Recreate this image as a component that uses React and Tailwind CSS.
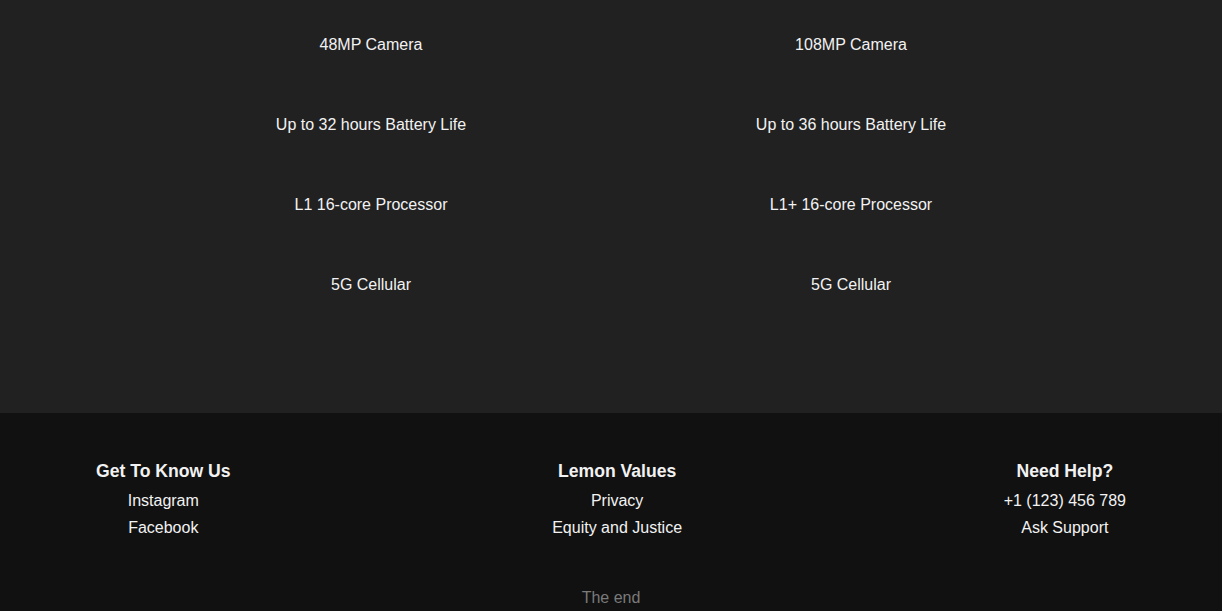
const specs = [
  ["48MP Camera", "108MP Camera"],
  ["Up to 32 hours Battery Life", "Up to 36 hours Battery Life"],
  ["L1 16-core Processor", "L1+ 16-core Processor"],
  ["5G Cellular", "5G Cellular"],
];

const footerCols = [
  { title: "Get To Know Us", links: ["Instagram", "Facebook"] },
  { title: "Lemon Values", links: ["Privacy", "Equity and Justice"] },
  { title: "Need Help?", links: ["+1 (123) 456 789", "Ask Support"] },
];

export default function App() {
  return (
    <div className="min-h-screen bg-[#111111] text-[#f2f2f2] font-['Liberation_Sans',Arial,sans-serif]">
      {/* comparison rows */}
      <section className="bg-[#212121] pt-[33px] pb-[116px]">
        <div className="mx-auto max-w-[960px] flex flex-col gap-[56px]">
          {specs.map(([a, b], i) => (
            <div key={i} className="grid grid-cols-2 text-center text-base leading-6">
              <span>{a}</span>
              <span>{b}</span>
            </div>
          ))}
        </div>
      </section>

      <footer className="bg-[#111111] pt-[44px] pb-[12px]">
        <div className="flex justify-between px-[96px]">
          {footerCols.map((col) => (
            <div key={col.title} className="flex flex-col items-center">
              <h3 className="text-[17.6px] font-bold leading-[28px]">{col.title}</h3>
              <ul className="mt-[2px] flex flex-col items-center">
                {col.links.map((l) => (
                  <li key={l} className="text-base leading-[27px]">{l}</li>
                ))}
              </ul>
            </div>
          ))}
        </div>
        <p className="mt-[45px] text-center text-base leading-6 text-[#7a7a7a]">The end</p>
      </footer>
    </div>
  );
}
